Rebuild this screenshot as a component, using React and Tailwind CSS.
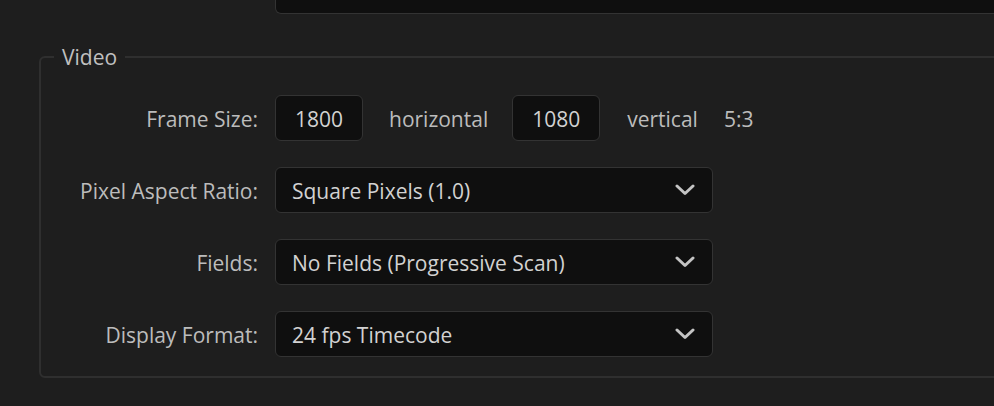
function Chevron() {
  return (
    <svg width="20" height="12" viewBox="0 0 20 12" className="shrink-0">
      <polyline
        points="2,2 10,9.5 18,2"
        fill="none"
        stroke="#c4c4c4"
        strokeWidth="3"
        strokeLinecap="round"
        strokeLinejoin="round"
      />
    </svg>
  );
}

function Select({ value }) {
  return (
    <div className="flex h-[46px] w-[438px] items-center justify-between rounded-md border border-[#333333] bg-[#0f0f0f] pl-[16px] pr-[17px] text-[#d2d2d2]">
      <span className="pt-[3px]">{value}</span>
      <Chevron />
    </div>
  );
}

function NumBox({ value }) {
  return (
    <div className="flex h-[46px] w-[88px] items-center justify-center rounded-md border border-[#333333] bg-[#0f0f0f] pt-[3px] text-[#d2d2d2]">
      {value}
    </div>
  );
}

export default function App() {
  const rows = [
    ["Pixel Aspect Ratio:", "Square Pixels (1.0)"],
    ["Fields:", "No Fields (Progressive Scan)"],
    ["Display Format:", "24 fps Timecode"],
  ];

  return (
    <div
      className="h-[406px] w-[994px] overflow-hidden bg-[#1e1e1e] text-[21px] text-[#bcbcbc]"
      style={{ fontFamily: '"Open Sans", "Liberation Sans", sans-serif' }}
    >
      <div className="-mr-[20px] ml-[275px] h-[14px] rounded-bl-md border border-t-0 border-[#333333] bg-[#0f0f0f]" />

      <fieldset className="-mr-[20px] ml-[39px] mt-[29px] rounded-l-md border-2 border-[#2f2f2f] pb-[19px]">
        <legend className="ml-[13px] px-[8px] leading-[28px] text-[#c0c0c0]">Video</legend>

        <div className="mt-[24px] grid grid-cols-[217px_auto] items-center gap-x-[17px] gap-y-[26px]">
          <div className="pt-[4px] text-right">Frame Size:</div>
          <div className="flex items-center">
            <NumBox value="1800" />
            <span className="ml-[26px] mr-[24px] pt-[4px]">horizontal</span>
            <NumBox value="1080" />
            <span className="ml-[27px] pt-[4px]">vertical</span>
            <span className="ml-[26px] pt-[4px]">5:3</span>
          </div>

          {rows.map(([label, value]) => (
            <>
              <div key={label} className="pt-[3px] text-right">
                {label}
              </div>
              <Select key={value} value={value} />
            </>
          ))}
        </div>
      </fieldset>
    </div>
  );
}
